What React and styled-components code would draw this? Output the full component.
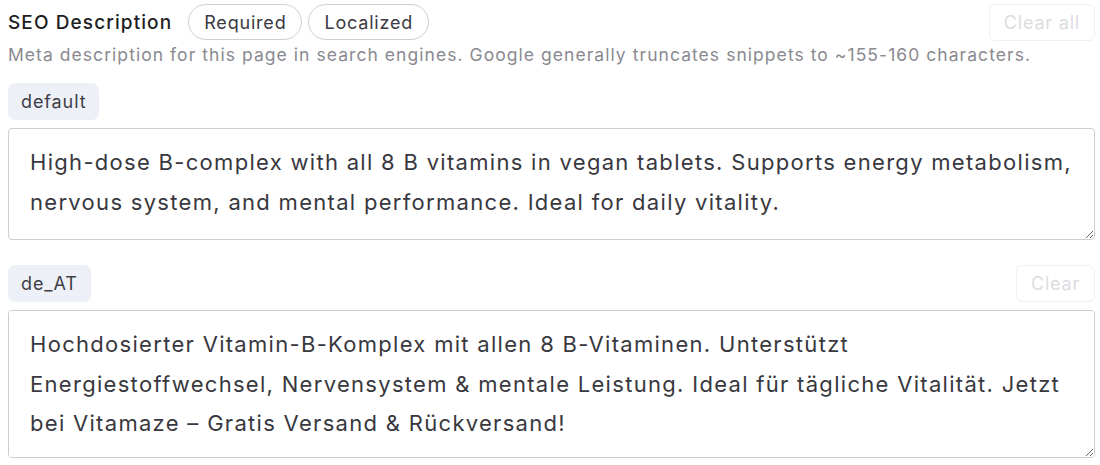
import React from "react";
import styled, { createGlobalStyle } from "styled-components";

const Global = createGlobalStyle`
  html, body { margin: 0; padding: 0; background: #ffffff; }
  body { font-family: Inter, "Noto Sans", sans-serif; -webkit-font-smoothing: antialiased; }
  * { box-sizing: border-box; }
`;

const Page = styled.div`
  padding: 4px 5px 0 8px;
  display: flex;
  flex-direction: column;
`;

const HeaderRow = styled.div`
  display: flex;
  align-items: center;
  gap: 6px;
  height: 36px;
`;

const Title = styled.span`
  font-size: 19px;
  font-weight: 500;
  letter-spacing: 1.1px;
  color: #1e1e22;
  margin-right: 10px;
`;

const Pill = styled.span`
  display: inline-flex;
  align-items: center;
  height: 36px;
  padding: 0 15px;
  border: 1px solid #cfcfd2;
  border-radius: 18px;
  font-size: 18px;
  letter-spacing: 0.8px;
  color: #3a3a42;
`;

const Spacer = styled.div`
  flex: 1;
`;

const GhostButton = styled.button`
  height: 37px;
  padding: 0 14px;
  border: 1px solid #f0f0f2;
  border-radius: 6px;
  background: #ffffff;
  font-family: inherit;
  font-size: 18px;
  letter-spacing: 0.8px;
  color: #dcdcdf;
  cursor: not-allowed;
`;

const Description = styled.p`
  margin: 4px 0 0;
  font-size: 17.5px;
  line-height: 22px;
  letter-spacing: 1.05px;
  color: #8a8a90;
`;

const Locale = styled.section`
  display: flex;
  flex-direction: column;
  gap: 8px;
  margin-top: ${(p) => p.$top}px;
`;

const LocaleRow = styled.div`
  display: flex;
  align-items: center;
`;

const Tag = styled.span`
  display: inline-flex;
  align-items: center;
  height: 37px;
  padding: 0 13px;
  border-radius: 7px;
  background: #eef0f7;
  font-size: 18px;
  letter-spacing: 0.9px;
  color: #3e3e46;
`;

const Field = styled.textarea`
  width: 100%;
  height: ${(p) => p.$h}px;
  padding: 14px 21px;
  border: 1px solid #cdcdd0;
  border-radius: 4px;
  font-family: inherit;
  font-size: 22px;
  line-height: 39.5px;
  letter-spacing: 1.3px;
  color: #38383e;
  resize: vertical;
  outline: none;
  background: #ffffff;
`;

export default function App() {
  return (
    <Page>
      <Global />
      <HeaderRow>
        <Title>SEO Description</Title>
        <Pill>Required</Pill>
        <Pill>Localized</Pill>
        <Spacer />
        <GhostButton disabled>Clear all</GhostButton>
      </HeaderRow>
      <Description>
        Meta description for this page in search engines. Google generally truncates snippets to ~155-160 characters.
      </Description>
      <Locale $top={17}>
        <LocaleRow>
          <Tag>default</Tag>
        </LocaleRow>
        <Field
          $h={112}
          defaultValue="High-dose B-complex with all 8 B vitamins in vegan tablets. Supports energy metabolism, nervous system, and mental performance. Ideal for daily vitality."
        />
      </Locale>
      <Locale $top={25}>
        <LocaleRow>
          <Tag>de_AT</Tag>
          <Spacer />
          <GhostButton disabled>Clear</GhostButton>
        </LocaleRow>
        <Field
          $h={148}
          defaultValue="Hochdosierter Vitamin-B-Komplex mit allen 8 B-Vitaminen. Unterstützt Energiestoffwechsel, Nervensystem & mentale Leistung. Ideal für tägliche Vitalität. Jetzt bei Vitamaze – Gratis Versand & Rückversand!"
        />
      </Locale>
    </Page>
  );
}
